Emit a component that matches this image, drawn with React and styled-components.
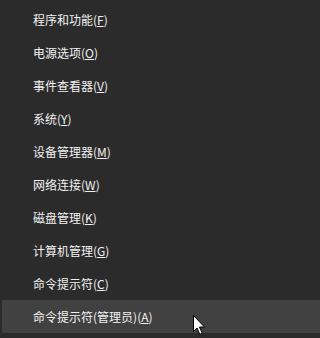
import styled, { createGlobalStyle } from "styled-components";

const GlobalStyle = createGlobalStyle`
  html, body {
    margin: 0;
    padding: 0;
    background: #2b2b2b;
  }
`;

const Menu = styled.ul`
  list-style: none;
  margin: 0;
  padding: 3px 0 0 2px;
  width: 100%;
  min-width: 228px;
  height: 338px;
  box-sizing: border-box;
  background: #2b2b2b;
  overflow: hidden;
  font-family: "Microsoft YaHei", "Noto Sans CJK SC", "Noto Sans", sans-serif;
`;

const Item = styled.li`
  display: flex;
  align-items: center;
  height: 33px;
  padding-left: 31px;
  font-size: 12px;
  color: #f2f2f2;
  background: ${(p) => (p.$active ? "#414141" : "transparent")};
  white-space: nowrap;
  position: relative;
`;

const Key = styled.span`
  text-decoration: underline;
  text-underline-offset: 1px;
`;

const Cursor = styled.svg`
  position: absolute;
  left: 190px;
  top: 14px;
  width: 14px;
  height: 22px;
`;

const items = [
  ["程序和功能", "F"],
  ["电源选项", "O"],
  ["事件查看器", "V"],
  ["系统", "Y"],
  ["设备管理器", "M"],
  ["网络连接", "W"],
  ["磁盘管理", "K"],
  ["计算机管理", "G"],
  ["命令提示符", "C"],
  ["命令提示符(管理员)", "A"],
];

export default function App() {
  return (
    <>
      <GlobalStyle />
      <Menu>
        {items.map(([label, key], i) => {
          const active = i === items.length - 1;
          return (
            <Item key={label} $active={active}>
              {label}(<Key>{key}</Key>)
              {active && (
                <Cursor viewBox="0 0 14 22">
                  <path
                    d="M1.5 1.5 L1.5 17.5 L5 14 L7.8 20.3 L10.2 19.2 L7.5 13 L12.5 13 Z"
                    fill="#ffffff"
                    stroke="#000000"
                    strokeWidth="1"
                    strokeLinejoin="miter"
                  />
                </Cursor>
              )}
            </Item>
          );
        })}
      </Menu>
    </>
  );
}
